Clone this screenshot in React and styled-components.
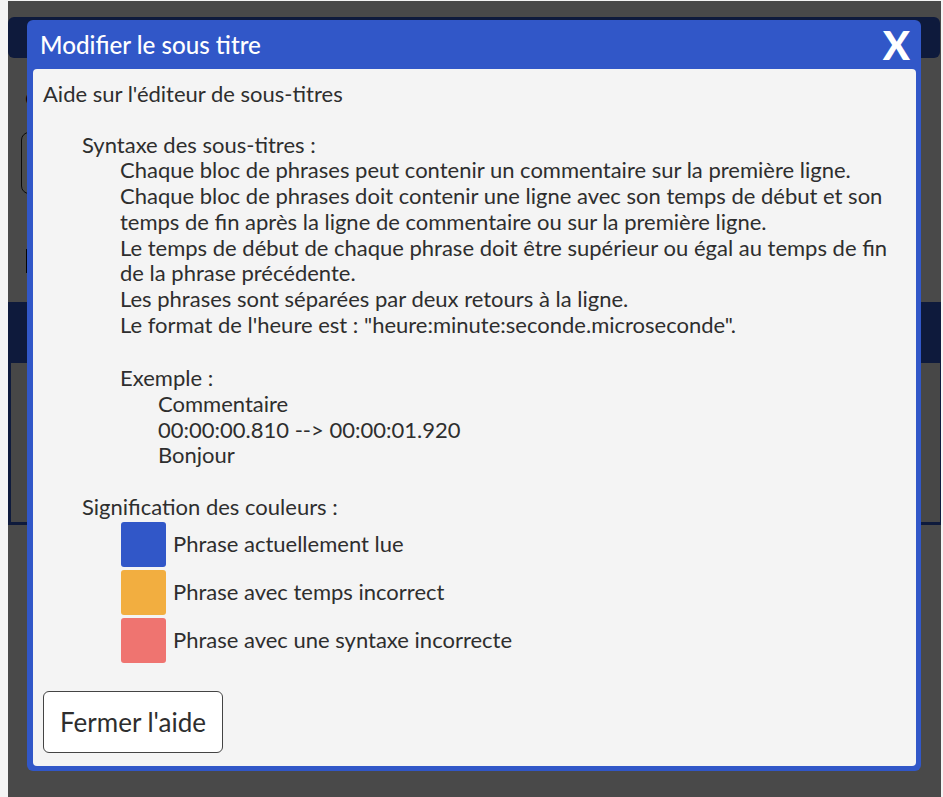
import React from "react";
import styled, { createGlobalStyle } from "styled-components";

const GlobalStyle = createGlobalStyle`
  html, body {
    margin: 0;
    padding: 0;
    background-color: #f4f4f4;
    font-family: Lato, "Open Sans", "Liberation Sans", sans-serif;
  }
`;

const Page = styled.div`
  position: relative;
  height: 796px;
  margin: 1px 2px 0 8px;
  overflow: hidden;
  color: #333;
`;

const TopBar = styled.div`
  height: 41px;
  margin: 16px 1px 0 0;
  background-color: #3157c8;
  border-radius: 6px;
`;

const PageHeading = styled.h2`
  margin: 28px 0 0 17px;
  font-size: 20px;
  font-weight: 400;
  color: #111;
`;

const FieldBox = styled.div`
  height: 60px;
  margin: 22px 20px 0 13px;
  border: 1px solid #222;
  border-radius: 8px;
  background: #fff;
`;

const FieldLabel = styled.div`
  height: 24px;
  margin: 55px 0 0 18px;
  border-left: 2px solid #111;
`;

const Band = styled.div`
  height: 223px;
  margin: 29px -2px 0 0;
  padding: 61px 3px 0 3px;
  box-sizing: border-box;
  background-color: #3157c8;
`;

const BandPanel = styled.div`
  height: 159px;
  background-color: #eeeeee;
`;

const Overlay = styled.div`
  position: absolute;
  inset: 0;
  background-color: rgba(0, 0, 0, 0.7);
`;

const Modal = styled.div`
  position: absolute;
  top: 19px;
  left: 19px;
  width: 894px;
  height: 751px;
  display: flex;
  flex-direction: column;
  padding: 0 5px 5px 6px;
  box-sizing: border-box;
  background-color: #3157c8;
  border-radius: 6px;
`;

const ModalHeader = styled.div`
  height: 49px;
  display: flex;
  align-items: center;
  justify-content: space-between;
  padding: 0 6px 0 7px;
`;

const ModalTitle = styled.h1`
  margin: 0;
  font-size: 24.2px;
  font-weight: 500;
  color: #fff;
`;

const CloseX = styled.span`
  font-size: 40px;
  font-weight: 900;
  line-height: 1;
  color: #fff;
  cursor: pointer;
`;

const ModalBody = styled.div`
  flex: 1;
  display: flex;
  flex-direction: column;
  align-items: flex-start;
  padding: 12px 10px;
  background-color: #f4f4f4;
  border-radius: 4px;
  font-size: 22px;
  line-height: 25.7px;
  color: #2e2e2e;
`;

const Intro = styled.div``;

const Section = styled.div`
  margin: ${(p) => p.$top || 25}px 0 0 39px;
`;

const Indented = styled.div`
  margin: ${(p) => p.$top || 0}px 0 0 38px;
`;

const LegendRow = styled.div`
  display: flex;
  align-items: center;
  gap: 7px;
  margin: 3px 0 0 39px;
  &:first-of-type {
    margin-top: 2px;
  }
`;

const Swatch = styled.span`
  width: 45px;
  height: 45px;
  border-radius: 3px;
  background-color: ${(p) => p.$color};
`;

const CloseButton = styled.button`
  margin-top: 28px;
  height: 62px;
  padding: 0 16px;
  font-family: inherit;
  font-size: 26px;
  color: #2e2e2e;
  background-color: #fff;
  border: 1px solid #444;
  border-radius: 6px;
  cursor: pointer;
`;

const legend = [
  { color: "#3157c8", label: "Phrase actuellement lue" },
  { color: "#f2ae40", label: "Phrase avec temps incorrect" },
  { color: "#ef7470", label: "Phrase avec une syntaxe incorrecte" },
];

export default function App() {
  return (
    <>
      <GlobalStyle />
      <Page>
        <TopBar />
        <PageHeading>Commentaires</PageHeading>
        <FieldBox />
        <FieldLabel />
        <Band>
          <BandPanel />
        </Band>
        <Overlay />
        <Modal>
          <ModalHeader>
            <ModalTitle>Modifier le sous titre</ModalTitle>
            <CloseX>X</CloseX>
          </ModalHeader>
          <ModalBody>
            <Intro>Aide sur l'éditeur de sous-titres</Intro>
            <Section>
              Syntaxe des sous-titres :
              <Indented>
                Chaque bloc de phrases peut contenir un commentaire sur la
                première ligne.
                <br />
                Chaque bloc de phrases doit contenir une ligne avec son temps de
                début et son temps de fin après la ligne de commentaire ou sur
                la première ligne.
                <br />
                Le temps de début de chaque phrase doit être supérieur ou égal
                au temps de fin de la phrase précédente.
                <br />
                Les phrases sont séparées par deux retours à la ligne.
                <br />
                Le format de l'heure est : "heure:minute:seconde.microseconde".
              </Indented>
              <Indented $top={28}>
                Exemple :
                <Indented>
                  Commentaire
                  <br />
                  00:00:00.810 --&gt; 00:00:01.920
                  <br />
                  Bonjour
                </Indented>
              </Indented>
            </Section>
            <Section $top={26}>
              Signification des couleurs :
              {legend.map((item) => (
                <LegendRow key={item.label}>
                  <Swatch $color={item.color} />
                  {item.label}
                </LegendRow>
              ))}
            </Section>
            <CloseButton>Fermer l'aide</CloseButton>
          </ModalBody>
        </Modal>
      </Page>
    </>
  );
}
